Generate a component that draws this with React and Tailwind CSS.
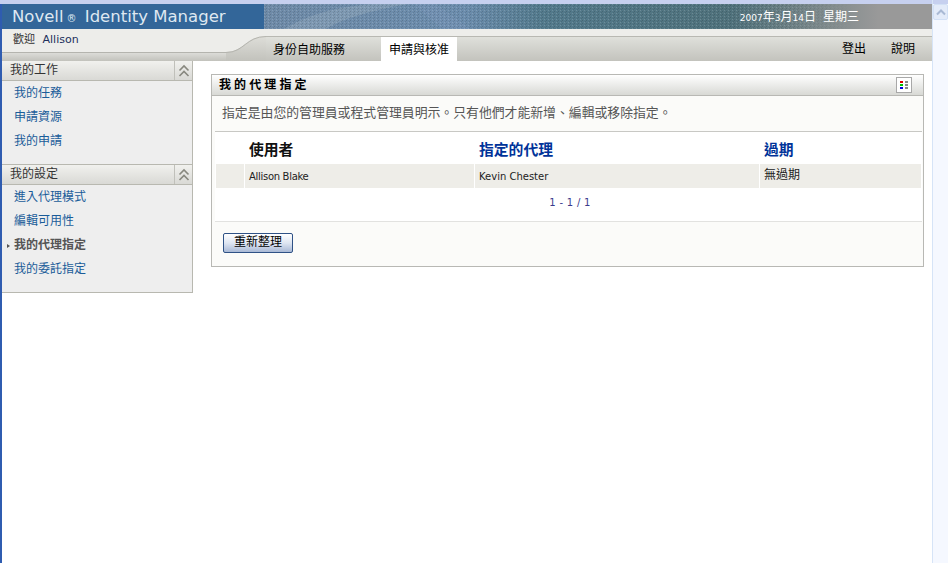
import React from 'react'

const cjk = "font-['DejaVu_Sans','Noto_Sans_CJK_TC',sans-serif]"

const ChevronsUp = () => (
  <svg width="14" height="14" viewBox="0 0 14 14" fill="none" stroke="#88887f" strokeWidth="1.6">
    <path d="M2.500 6.500 7 2l4.500 4.500" />
    <path d="M2.500 12 7 7.500l4.500 4.500" />
  </svg>
)

const HeaderTexture = () => (
  <svg className="absolute left-[262px] top-0 h-full w-[668px]" viewBox="0 0 668 25" preserveAspectRatio="none">
    <defs>
      <linearGradient id="fade" x1="0" x2="1" y1="0" y2="0">
        <stop offset="0" stopColor="#6f8ba8" />
        <stop offset="0.3" stopColor="#6c8dad" />
        <stop offset="0.42" stopColor="#537a8c" />
        <stop offset="0.7" stopColor="#50727c" />
        <stop offset="0.84" stopColor="#7f8a8c" />
        <stop offset="0.92" stopColor="#999999" />
        <stop offset="1" stopColor="#999999" />
      </linearGradient>
      <linearGradient id="dotFade" x1="0" x2="1" y1="0" y2="0">
        <stop offset="0" stopColor="#fff" />
        <stop offset="0.78" stopColor="#fff" />
        <stop offset="0.88" stopColor="#000" />
      </linearGradient>
      <pattern id="weave" width="4" height="3" patternUnits="userSpaceOnUse">
        <rect width="1" height="1" fill="#ffffff" fillOpacity="0.16" />
        <rect x="2" y="1" width="1" height="1" fill="#000000" fillOpacity="0.14" />
        <rect x="1" y="2" width="1" height="1" fill="#000000" fillOpacity="0.1" />
      </pattern>
      <mask id="dotMask">
        <rect width="668" height="25" fill="url(#dotFade)" />
      </mask>
    </defs>
    <rect width="668" height="25" fill="url(#fade)" />
    <path d="M20 25C45 10 75 2 110 0h34C110 6 80 14 62 25Z" fill="#9db2c4" fillOpacity="0.35" />
    <path d="M150 0h22l34 25h-28Z" fill="#7a97bb" fillOpacity="0.35" />
    <rect width="668" height="25" fill="url(#weave)" mask="url(#dotMask)" />
  </svg>
)

const SideHeader = ({ title }) => (
  <div className="flex h-5 items-stretch border-b border-[#b8b8b0] bg-gradient-to-b from-[#f1f1ee] to-[#d9d9d5]">
    <div className="flex-1 pl-2 text-xs leading-[18px] text-[#333]">{title}</div>
    <div className="flex w-[18px] items-center justify-center border-l border-[#c0c0ba]">
      <ChevronsUp />
    </div>
  </div>
)

const SideLink = ({ label, active }) => (
  <div className="relative flex h-6 items-center pl-3">
    {active && <span className="absolute left-[5px] top-[11px] h-0 w-0 border-y-2 border-l-[3px] border-y-transparent border-l-[#555]" />}
    <span className={active ? 'text-xs font-bold text-[#555]' : 'text-xs text-[#1a5c99]'}>{label}</span>
  </div>
)

const HeadCell = ({ children, link }) => (
  <div className={`flex items-center pl-[4px] pt-[5px] text-[14.8px] font-bold ${link ? 'text-[#003399]' : 'text-[#111]'}`}>{children}</div>
)

const BodyCell = ({ children, className = '' }) => (
  <div className={`flex items-center bg-[#eeede8] pl-[4px] text-[#222] ${className}`}>{children}</div>
)

export default function App() {
  return (
    <div className={`flex h-[563px] w-[948px] overflow-hidden bg-white ${cjk}`}>
      <div className="flex w-[932px] flex-col border-l-2 border-[#2f5cb0]">
        <div className="h-1 -ml-[2px] bg-[#c6d0ef]" />

        {/* banner */}
        <div className="relative flex h-[25px] items-center bg-[#336699]">
          <HeaderTexture />
          <div className="relative pl-[10px] pt-[2px] text-[16.5px] text-[#dfe8f1]">
            Novell<span className="mx-[3px] text-[10px]">®</span> Identity Manager
          </div>
          <div className="relative ml-auto mr-[73px] flex items-baseline text-xs text-white">
            <span className="text-[9px]">2007</span>年<span className="text-[9px]">3</span>月<span className="text-[9px]">14</span>日<span className="ml-[7px]">星期三</span>
          </div>
        </div>

        {/* nav */}
        <div className="flex h-8 bg-[#ededea]">
          <div className="flex w-[224px] flex-col">
            <div className="h-[23px] pl-[11px] pt-[3px] text-[11px] text-[#333]">
              歡迎 <span className="ml-[4px] text-[11px] text-[#22305c]">Allison</span>
            </div>
            <div className="h-[9px] border-t border-[#b4b4ae] bg-gradient-to-b from-[#dcdcd8] to-[#c2c2bc]" />
          </div>
          <svg width="40" height="32" viewBox="0 0 40 32" className="shrink-0">
            <defs>
              <linearGradient id="navBand" x1="0" x2="0" y1="0" y2="1">
                <stop offset="0" stopColor="#deded9" />
                <stop offset="1" stopColor="#c2c2bc" />
              </linearGradient>
            </defs>
            <path d="M0 23C18 23 20 7 40 7V32H0Z" fill="url(#navBand)" />
            <path d="M0 23.500C18 23.500 20 7.500 40 7.500" fill="none" stroke="#b4b4ae" />
          </svg>
          <div className="mt-[7px] flex flex-1 items-stretch border-t border-[#b8b8b2] bg-gradient-to-b from-[#dfe0db] to-[#c3c3bd] text-xs text-black">
            <div className="ml-[7px] flex items-center pt-[2px]">身份自助服務</div>
            <div className="ml-[36px] flex w-[76px] items-center justify-center bg-white pt-[2px]">申請與核准</div>
            <div className="ml-auto flex items-center gap-[25px] pr-[17px] pb-[1px]">
              <span>登出</span>
              <span>說明</span>
            </div>
          </div>
        </div>

        <div className="flex flex-1 items-start">
          {/* sidebar */}
          <div className="w-[191px] shrink-0 border-r border-b border-[#b8b8b0] bg-[#eeeeee]">
            <SideHeader title="我的工作" />
            <div className="h-[84px] border-b border-[#b8b8b0]">
              <SideLink label="我的任務" />
              <SideLink label="申請資源" />
              <SideLink label="我的申請" />
            </div>
            <SideHeader title="我的設定" />
            <div className="h-[107px]">
              <SideLink label="進入代理模式" />
              <SideLink label="編輯可用性" />
              <SideLink label="我的代理指定" active />
              <SideLink label="我的委託指定" />
            </div>
          </div>

          {/* content */}
          <div className="ml-[18px] mt-[13px] w-[713px] border border-[#b8b8b4] bg-[#fbfbf9]">
            <div className="flex h-[21px] items-center justify-between border-b border-[#b8b8b4] bg-gradient-to-b from-white to-[#d8d9d5] pl-[7px] pr-[11px]">
              <span className="text-xs font-bold tracking-[3.1px] text-black">我的代理指定</span>
              <div className="flex h-4 w-4 items-center justify-center border border-[#a8a8a8] bg-white">
                <svg width="10" height="10" viewBox="0 0 10 10" shapeRendering="crispEdges">
                  <rect x="1" y="1" width="3" height="2" fill="#e00000" />
                  <rect x="1" y="4" width="3" height="2" fill="#00c000" />
                  <rect x="1" y="7" width="3" height="2" fill="#0000e0" />
                  <rect x="6" y="1" width="3" height="2" fill="#888" />
                  <rect x="6" y="4" width="3" height="2" fill="#888" />
                  <rect x="6" y="7" width="3" height="2" fill="#888" />
                </svg>
              </div>
            </div>
            <div className="flex h-[35px] items-center pb-[2px] pl-[10px] text-[12.85px] text-[#555]">
              指定是由您的管理員或程式管理員明示。只有他們才能新增、編輯或移除指定。
            </div>
            <div className="mx-[3px] mr-[1px] border-t border-[#c8c8c4] bg-white pl-[1px] pr-[1px]">
              <div className="grid grid-cols-[28px_229px_284px_161px] grid-rows-[32px_24px] gap-x-px">
                <div />
                <HeadCell>使用者</HeadCell>
                <HeadCell link>指定的代理</HeadCell>
                <HeadCell link>過期</HeadCell>
                <BodyCell />
                <BodyCell className="pt-[1px] text-[10px] tracking-[-0.3px]">Allison Blake</BodyCell>
                <BodyCell className="pt-[1px] text-[10px]">Kevin Chester</BodyCell>
                <BodyCell className="pb-[3px] text-xs">無過期</BodyCell>
              </div>
              <div className="flex h-[33px] items-center justify-center pb-[4px] pl-[3px] text-[10px] tracking-[0.3px] text-[#3a3a8c]">1 - 1 / 1</div>
            </div>
            <div className="mx-[3px] mr-[1px] h-[45px] border-t border-[#e2e2e0] pl-[8px] pt-[11px]">
              <button className="flex h-5 w-[70px] items-center justify-center rounded-[2px] border border-[#2f5286] bg-gradient-to-b from-white via-[#dfe6f2] to-[#a9b9d6] pb-[2px] text-xs text-black">
                重新整理
              </button>
            </div>
          </div>
        </div>
      </div>

      {/* scrollbar */}
      <div className="w-4 border-l border-[#d6e4f7] bg-[#f5f8ff]">
        <div className="h-1 bg-[#c6d0ef]" />
        <div className="flex h-4 items-center justify-center rounded-[2px] border border-[#d2e0f5] bg-[#e3ebf9]">
          <svg width="10" height="8" viewBox="0 0 10 8" fill="none" stroke="#a9b9d4" strokeWidth="2">
            <path d="M1 6.500 5 2.500l4 4" />
          </svg>
        </div>
      </div>
    </div>
  )
}
